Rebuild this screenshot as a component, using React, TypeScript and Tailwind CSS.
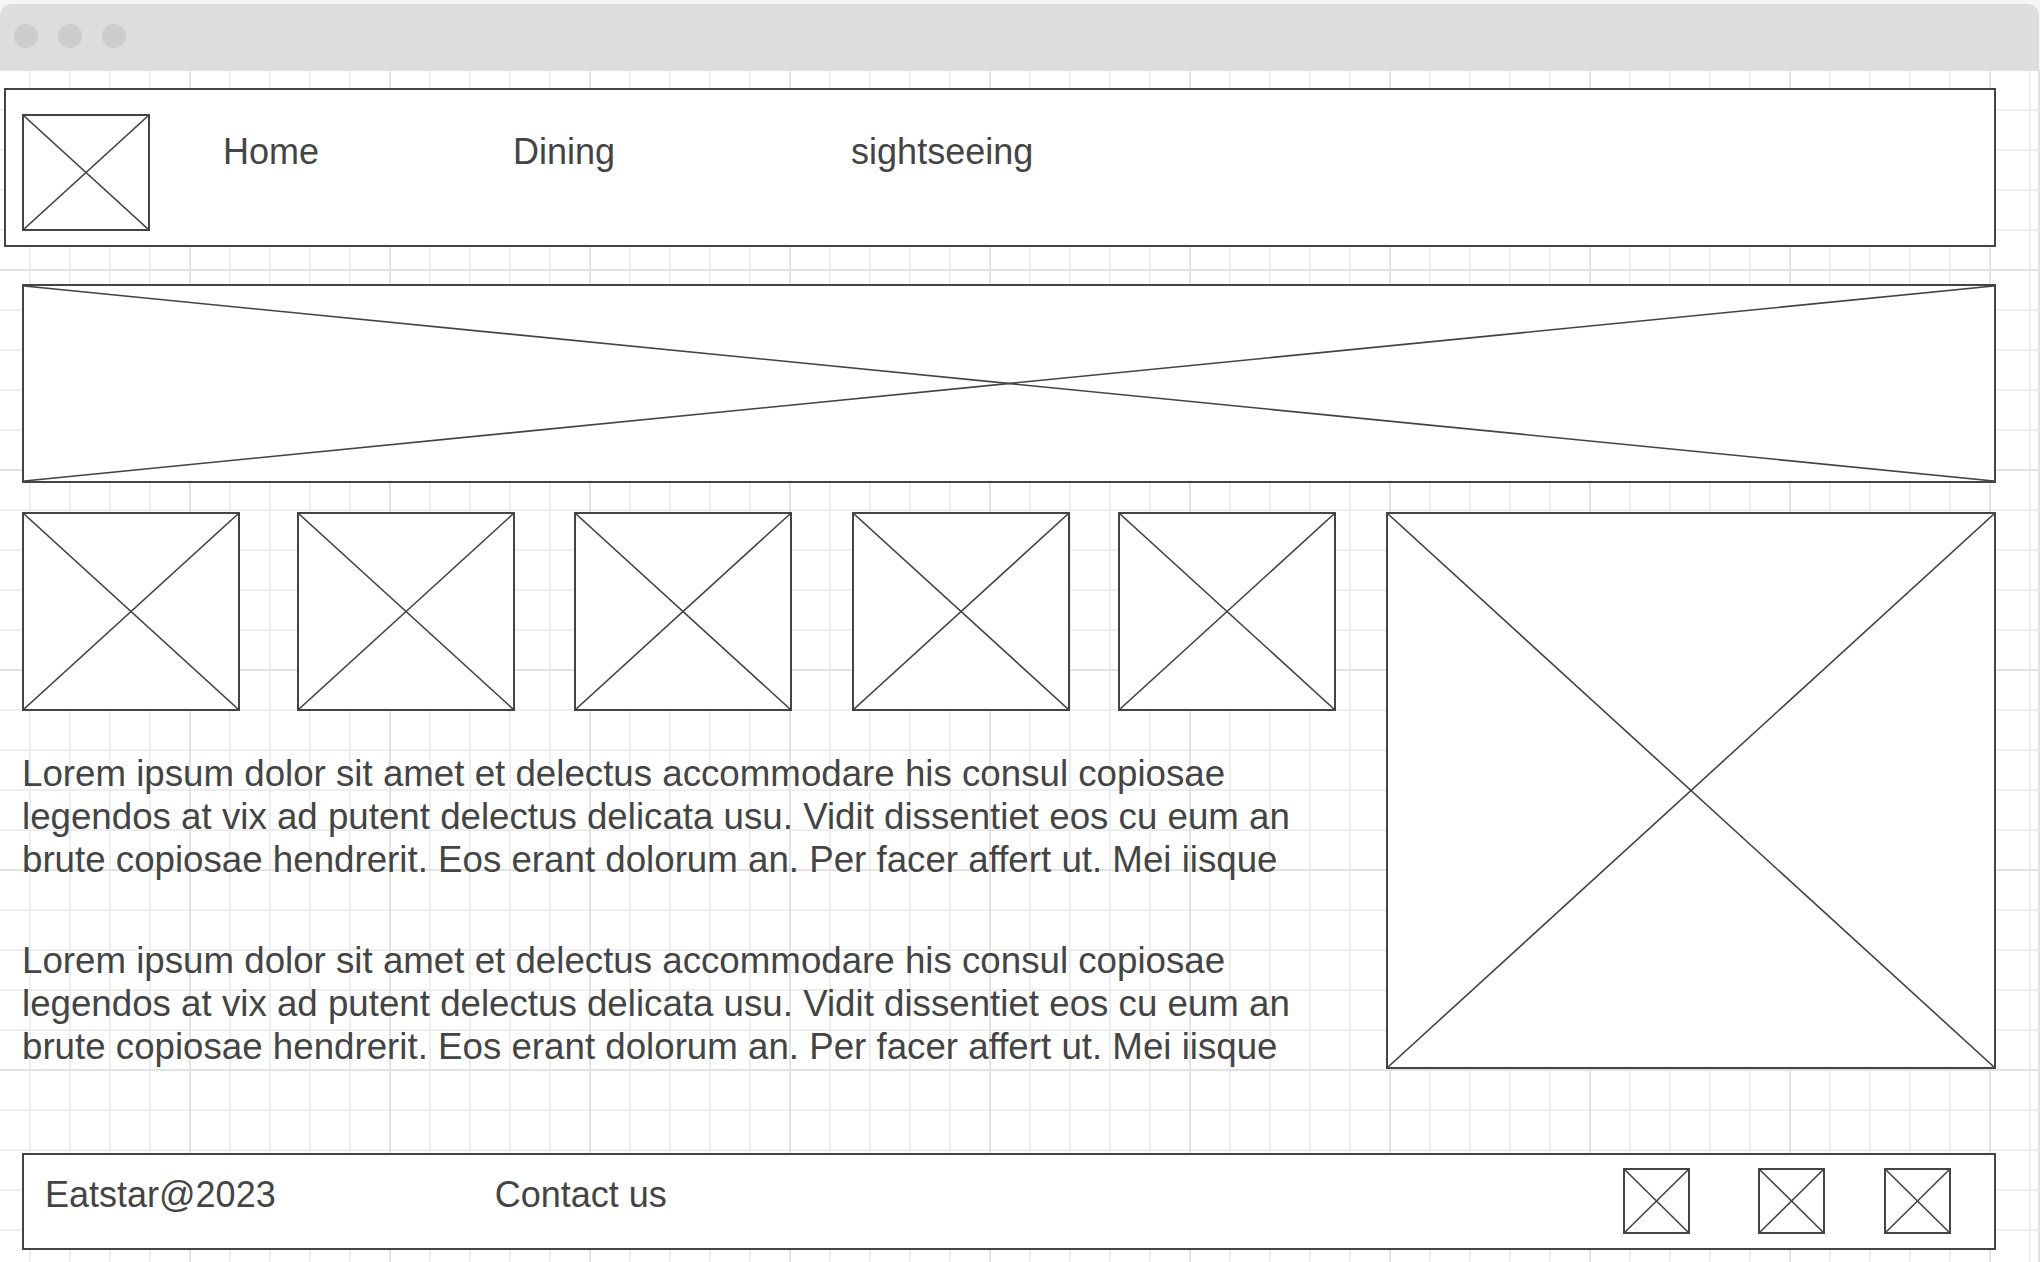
import React from "react";

const font = { fontFamily: '"Liberation Sans", Arial, sans-serif' };

function Ph({ className = "" }: { className?: string }) {
  return (
    <div className={`relative border-2 border-[#444444] shrink-0 ${className}`}>
      <svg
        className="absolute inset-0 w-full h-full"
        viewBox="0 0 100 100"
        preserveAspectRatio="none"
      >
        <line x1="0" y1="0" x2="100" y2="100" stroke="#444444" strokeWidth="1.6" vectorEffect="non-scaling-stroke" />
        <line x1="100" y1="0" x2="0" y2="100" stroke="#444444" strokeWidth="1.6" vectorEffect="non-scaling-stroke" />
      </svg>
    </div>
  );
}

const lines = [
  "Lorem ipsum dolor sit amet et delectus accommodare his consul copiosae",
  "legendos at vix ad putent delectus delicata usu. Vidit dissentiet eos cu eum an",
  "brute copiosae hendrerit. Eos erant dolorum an. Per facer affert ut. Mei iisque",
];

function Para({ className = "" }: { className?: string }) {
  return (
    <div className={`text-[36.7px] leading-[43px] text-[#444444] whitespace-nowrap ${className}`}>
      {lines.map((l, i) => (
        <div key={i}>{l}</div>
      ))}
    </div>
  );
}

export default function App() {
  return (
    <div className="w-[2040px] h-[1262px] bg-[#f5f5f5] overflow-hidden flex flex-col" style={font}>
      <div className="mt-[4px] h-[66px] w-[2039px] bg-[#dddddd] rounded-t-[12px] flex items-start pl-[14px] pt-[20px] gap-[20px] shrink-0">
        <div className="w-[24px] h-[24px] rounded-full bg-[#cccccc]" />
        <div className="w-[24px] h-[24px] rounded-full bg-[#cccccc]" />
        <div className="w-[24px] h-[24px] rounded-full bg-[#cccccc]" />
      </div>
      <div className="flex-1 w-[2040px] bg-white border-r-2 border-[#e2e2e2] flex flex-col [background-image:linear-gradient(to_right,#e3e3e3_2px,transparent_2px),linear-gradient(to_bottom,#e3e3e3_2px,transparent_2px),linear-gradient(to_right,#eeeeee_2px,transparent_2px),linear-gradient(to_bottom,#eeeeee_2px,transparent_2px)] [background-size:200px_200px,200px_200px,40px_40px,40px_40px] [background-position:189px_199px,189px_199px,29px_39px,29px_39px]">
        {/* header */}
        <div className="mt-[18px] ml-[4px] w-[1992px] h-[159px] border-2 border-[#444444] bg-white flex items-start shrink-0">
          <Ph className="ml-[16px] mt-[24px] w-[128px] h-[117px]" />
          <div className="ml-[73px] mt-[44px] text-[36px] leading-[36px] text-[#444444]">Home</div>
          <div className="ml-[194px] mt-[44px] text-[36px] leading-[36px] text-[#444444]">Dining</div>
          <div className="ml-[236px] mt-[44px] text-[36px] leading-[36px] text-[#444444]">sightseeing</div>
        </div>
        {/* banner */}
        <Ph className="mt-[37px] ml-[22px] w-[1974px] h-[199px] bg-white" />
        {/* main */}
        <div className="mt-[29px] ml-[22px] flex items-start shrink-0">
          <div className="w-[1312px] flex flex-col">
            <div className="flex items-start">
              <Ph className="w-[218px] h-[199px] bg-white" />
              <Ph className="ml-[57px] w-[218px] h-[199px] bg-white" />
              <Ph className="ml-[59px] w-[218px] h-[199px] bg-white" />
              <Ph className="ml-[60px] w-[218px] h-[199px] bg-white" />
              <Ph className="ml-[48px] w-[218px] h-[199px] bg-white" />
            </div>
            <Para className="mt-[41px]" />
            <Para className="mt-[58px]" />
          </div>
          <Ph className="ml-[52px] w-[610px] h-[557px] bg-white" />
        </div>
        {/* footer */}
        <div className="mt-[84px] ml-[22px] w-[1974px] h-[97px] border-2 border-[#444444] bg-white flex items-start shrink-0">
          <div className="ml-[21px] mt-[22px] text-[36px] leading-[36px] text-[#444444]">Eatstar@2023</div>
          <div className="ml-[219px] mt-[22px] text-[36px] leading-[36px] text-[#444444]">Contact us</div>
          <div className="ml-auto mr-[43px] mt-[13px] flex items-start">
            <Ph className="w-[67px] h-[66px]" />
            <Ph className="ml-[68px] w-[67px] h-[66px]" />
            <Ph className="ml-[59px] w-[67px] h-[66px]" />
          </div>
        </div>
      </div>
    </div>
  );
}
